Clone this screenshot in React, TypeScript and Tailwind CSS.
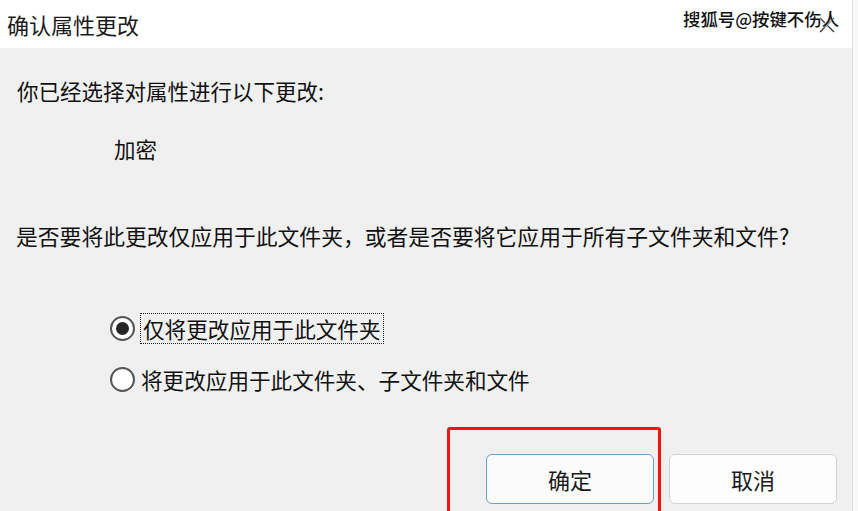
import React from "react";

const font = { fontFamily: '"Noto Sans CJK SC", "Noto Sans", sans-serif' };

function Radio({ checked }: { checked: boolean }) {
  return (
    <span className="flex h-[25px] w-[25px] shrink-0 items-center justify-center rounded-full border-2 border-[#555] bg-white">
      {checked && <span className="h-[13px] w-[13px] rounded-full bg-[#262626]" />}
    </span>
  );
}

export default function App() {
  return (
    <div
      className="relative h-[511px] w-[858px] overflow-hidden bg-[#f8f8f8] text-[#111] antialiased"
      style={font}
    >
      <div className="h-full w-[853px] border-r border-[#dcdcdc] bg-[#f0f0f0]">
        <div className="flex h-[48px] items-center bg-white pl-[7px] text-[22px] leading-none text-[#1a1a1a]">
          确认属性更改
        </div>
        <div className="flex flex-col">
          <div className="mt-[28px] pl-[17px] text-[21.5px] leading-[30px]">你已经选择对属性进行以下更改:</div>
          <div className="mt-[28px] pl-[114px] text-[21.5px] leading-[30px]">加密</div>
          <div className="mt-[57px] pl-[16px] text-[21.8px] leading-[30px]">
            是否要将此更改仅应用于此文件夹，或者是否要将它应用于所有子文件夹和文件?
          </div>
          <div className="mt-[61px] flex h-[32px] items-center gap-[5px] pl-[110px]">
            <Radio checked />
            <span className="border border-dotted border-[#222] px-[2px] text-[21.6px] leading-[29px]">
              仅将更改应用于此文件夹
            </span>
          </div>
          <div className="mt-[19px] flex h-[32px] items-center gap-[6px] pl-[110px]">
            <Radio checked={false} />
            <span className="text-[21.6px] leading-[29px]">将更改应用于此文件夹、子文件夹和文件</span>
          </div>
          <div className="mt-[59px] flex justify-end gap-[15px] pr-[15px]">
            <button className="flex h-[50px] w-[168px] items-center justify-center rounded-[6px] border border-[#6a9fd4] bg-[#fbfbfb] text-[22px] text-[#1a1a1a]">
              确定
            </button>
            <button className="flex h-[50px] w-[168px] items-center justify-center rounded-[6px] border border-[#d2d2d2] bg-[#fdfdfd] text-[22px] text-[#1a1a1a]">
              取消
            </button>
          </div>
        </div>
      </div>

      {/* close glyph */}
      <svg className="absolute left-[818px] top-[16px]" width="18" height="18" viewBox="0 0 18 18">
        <path d="M2 2 L16 16 M16 2 L2 16" stroke="#333" strokeWidth="1.3" />
      </svg>

      {/* watermark */}
      <div
        className="absolute left-[683px] top-[6px] text-[17.4px] font-medium leading-[26px] text-[#111] [text-shadow:0_0_2px_#fff,0_0_2px_#fff,0_0_1px_#fff]"
        style={font}
      >
        搜狐号@按键不伤人
      </div>

      {/* red annotation */}
      <div className="absolute left-[447px] top-[427px] h-[100px] w-[214px] rounded-[3px] border-[3px] border-[#ff1010]" />
    </div>
  );
}
